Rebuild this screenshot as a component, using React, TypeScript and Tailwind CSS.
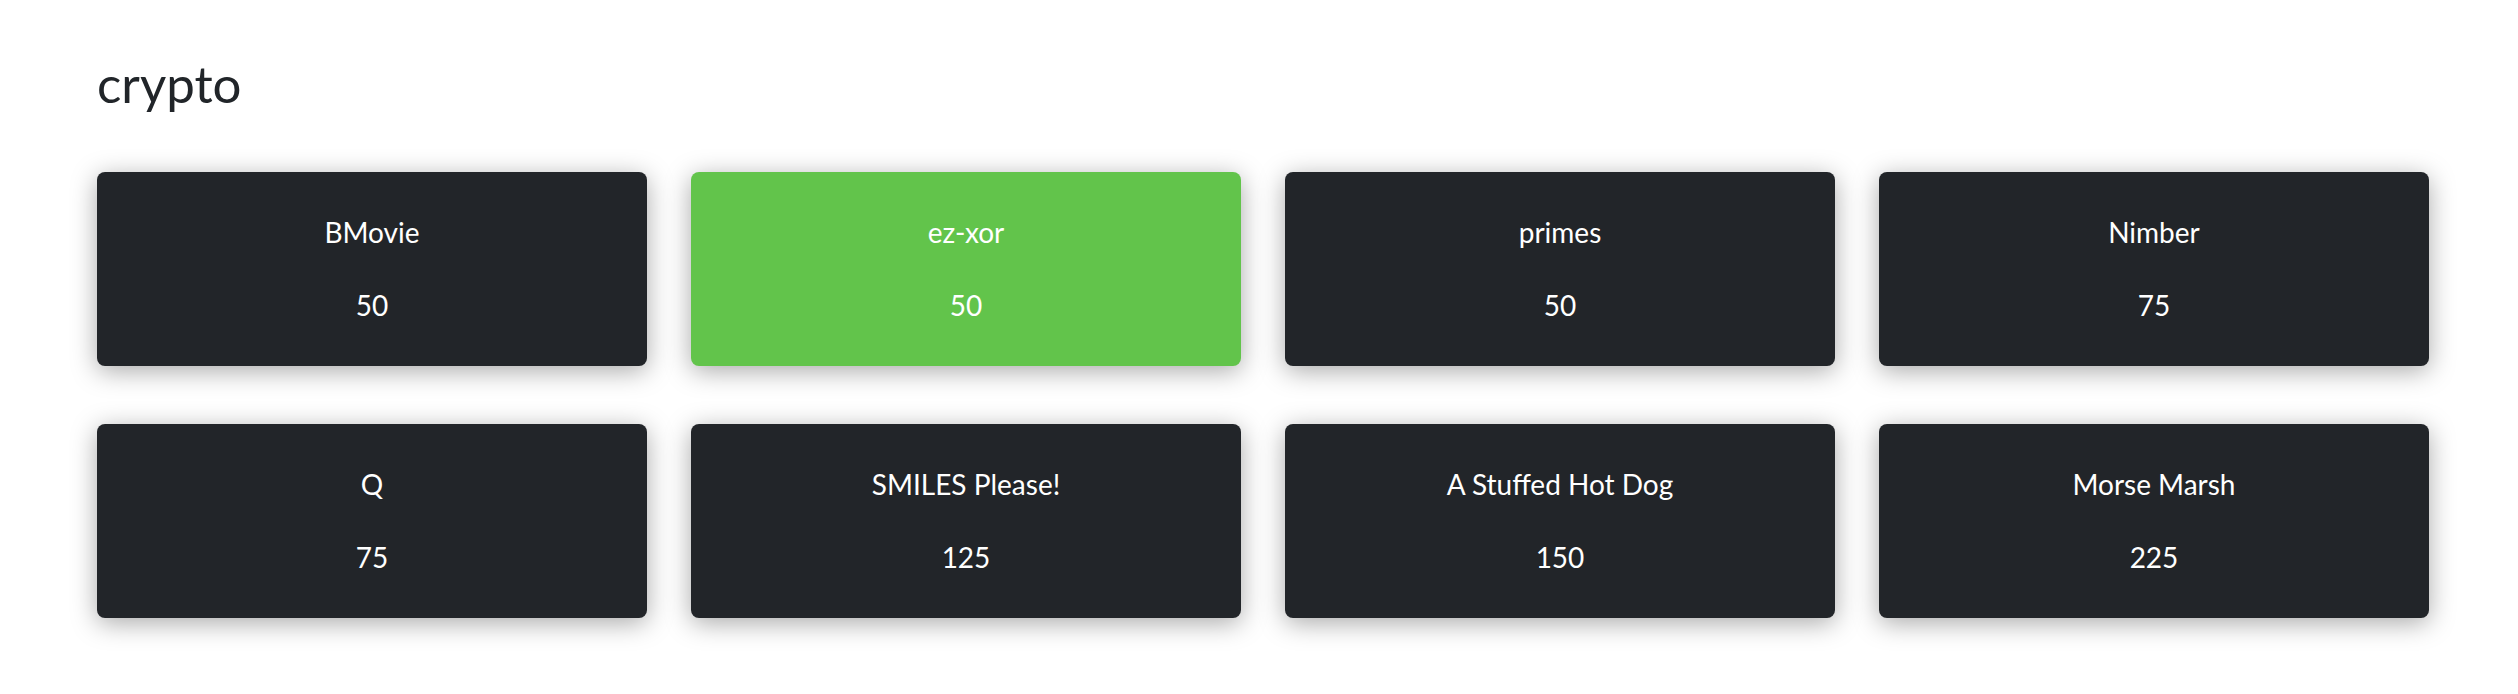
// Category grid: heading + challenge cards (name · points)

type Challenge = { name: string; points: number; solved?: boolean };

const challenges: Challenge[] = [
  { name: "BMovie", points: 50 },
  { name: "ez-xor", points: 50, solved: true },
  { name: "primes", points: 50 },
  { name: "Nimber", points: 75 },
  { name: "Q", points: 75 },
  { name: "SMILES Please!", points: 125 },
  { name: "A Stuffed Hot Dog", points: 150 },
  { name: "Morse Marsh", points: 225 },
];

function ChallengeCard({ name, points, solved }: Challenge) {
  return (
    <div
      className={
        "flex h-[194px] flex-col items-center justify-center gap-[39px] rounded-[8px] text-[28px] leading-[1.2] text-white shadow-[0_5px_26px_rgba(0,0,0,0.34)] " +
        (solved ? "bg-[#62c44b]" : "bg-[#222529]")
      }
    >
      <div>{name}</div>
      <div>{points}</div>
    </div>
  );
}

export default function App() {
  return (
    <div
      className="min-h-[694px] w-full bg-white pl-[97px] pt-[53px]"
      style={{ fontFamily: "Lato, 'Liberation Sans', sans-serif" }}
    >
      <h2 className="text-[51px] leading-[1.2] text-[#212529]">crypto</h2>

      <div className="mt-[58px] grid w-[2332px] grid-cols-4 gap-x-[44px] gap-y-[58px]">
        {challenges.map((c) => (
          <ChallengeCard key={c.name} {...c} />
        ))}
      </div>
    </div>
  );
}
